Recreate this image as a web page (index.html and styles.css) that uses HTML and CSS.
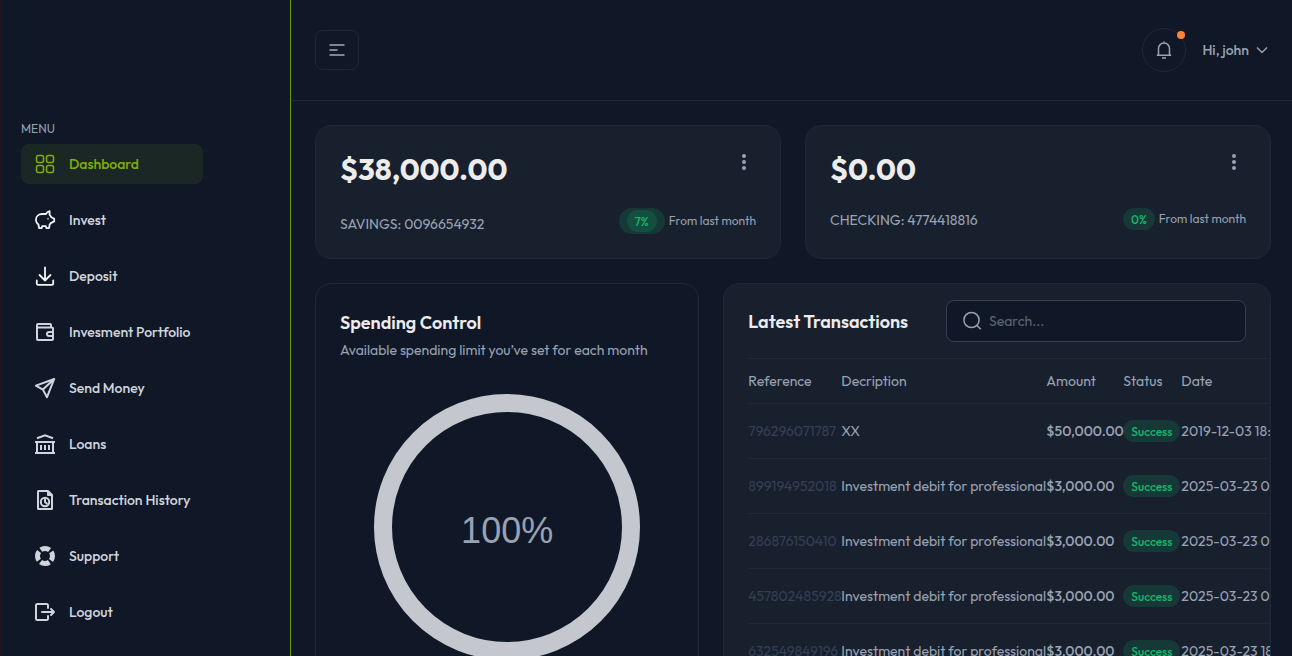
FILE: index.html
```html
<!DOCTYPE html>
<html lang="en">
<head>
<meta charset="utf-8">
<meta name="viewport" content="width=device-width, initial-scale=1">
<title>Dashboard</title>
<link rel="stylesheet" href="styles.css">
</head>
<body>
<div class="app">
  <aside class="sidebar">
    <h2 class="menu-title">MENU</h2>
    <nav class="menu">
      <a class="menu-item active" href="#"><svg class="icon thin" viewBox="0 0 24 24"><rect x="3.5" y="3.5" width="7" height="7" rx="2"/><rect x="13.5" y="3.5" width="7" height="7" rx="2"/><rect x="3.5" y="13.5" width="7" height="7" rx="2"/><rect x="13.5" y="13.5" width="7" height="7" rx="2"/></svg>Dashboard</a>
      <a class="menu-item" href="#"><svg class="icon" viewBox="0 0 24 24"><path class="bright" d="M16.6 3.2v3.6l1.8 2.5 2.8 1.5v2.6l-3.4 1.7-1.1 1.4-.7 3.7h-2.5l-.7-2H9.2l-.6 2H6.2l-.8-3.700A6 6 0 0 1 2.900 12C2.900 8.300 5.700 6 9.200 6h3.700c.8-1.500 2-2.400 3.700-2.800z"/><circle class="eye" cx="15" cy="10.800" r="1"/></svg>Invest</a>
      <a class="menu-item" href="#"><svg class="icon" viewBox="0 0 24 24"><path class="bright" d="M12 3.500v13M6.500 11l5.500 5.500 5.500-5.500M3.800 16.500v3a1.300 1.300 0 0 0 1.300 1.300h13.800a1.300 1.300 0 0 0 1.300-1.300v-3"/></svg>Deposit</a>
      <a class="menu-item" href="#"><svg class="icon bold" viewBox="0 0 24 24"><path d="M18 7V5a1 1 0 0 0-1-1H5a1 1 0 0 0-1 1v14a1 1 0 0 0 1 1h14a1 1 0 0 0 1-1v-2.500M4 7.500h15a1 1 0 0 1 1 1V11M20 12h-4a2 2 0 0 0 0 4h4z"/></svg>Invesment Portfolio</a>
      <a class="menu-item" href="#"><svg class="icon bold" viewBox="0 0 24 24"><path d="M21.200 3 2.900 9.600l7 4 4.100 7.600zM21.200 3 9.900 13.600"/></svg>Send Money</a>
      <a class="menu-item" href="#"><svg class="icon bold square" viewBox="0 0 24 24"><path d="M4 6.200 12 3.200l8 3M2 10h20M2 21h20M4 10v11M20 10v11M8 13v5M12 13v5M16 13v5"/></svg>Loans</a>
      <a class="menu-item" href="#"><svg class="icon bold" viewBox="0 0 24 24"><path d="M15 3H5.500a.5.500 0 0 0-.5.500v17a.5.500 0 0 0 .5.500h13a.5.500 0 0 0 .5-.5V7zM15 3v4h4M12 11.500V14l1.800 1.600"/><circle cx="12" cy="14" r="4.200"/></svg>Transaction History</a>
      <a class="menu-item" href="#"><svg class="icon" viewBox="0 0 24 24"><circle class="buoy" cx="12" cy="12" r="7.500"/></svg>Support</a>
      <a class="menu-item" href="#"><svg class="icon bold" viewBox="0 0 24 24"><path d="M15 8V5.200A1.200 1.200 0 0 0 13.800 4H4.200A1.200 1.200 0 0 0 3 5.200v13.600A1.200 1.200 0 0 0 4.200 20h9.600a1.200 1.200 0 0 0 1.200-1.200V16M9 12h12M18 9l3 3-3 3"/></svg>Logout</a>
    </nav>
  </aside>
  <div class="content">
    <header class="topbar">
      <button class="toggle" aria-label="Toggle sidebar"><svg class="bars" width="16" height="12" viewBox="0 0 16 12"><path d="M.5 1h15M.5 6h8M.5 11h15"/></svg></button>
      <div class="account">
        <button class="bell" aria-label="Notifications"><svg width="20" height="20" viewBox="0 0 20 20"><path d="M2.800 15.200h14.400M4.500 15V8.500a5.500 5.500 0 0 1 11 0V15M10 1.500V3M8 18h4"/></svg><span class="dot"></span></button>
        <button class="user">Hi, john<svg width="12" height="8" viewBox="0 0 12 8"><path d="m1 1.500 5 5 5-5"/></svg></button>
      </div>
    </header>
    <main class="main">
      <section class="card balance">
        <div class="balance-top"><h3 class="amount">$38,000.00</h3><button class="more" aria-label="More"><svg width="4" height="16" viewBox="0 0 4 16"><circle cx="2" cy="2" r="2"/><circle cx="2" cy="8" r="2"/><circle cx="2" cy="14" r="2"/></svg></button></div>
        <div class="balance-bottom"><span class="account-no">SAVINGS: 0096654932</span><span class="change"><span class="pill outer"><span class="pill">7%</span></span>From last month</span></div>
      </section>
      <section class="card balance">
        <div class="balance-top"><h3 class="amount">$0.00</h3><button class="more" aria-label="More"><svg width="4" height="16" viewBox="0 0 4 16"><circle cx="2" cy="2" r="2"/><circle cx="2" cy="8" r="2"/><circle cx="2" cy="14" r="2"/></svg></button></div>
        <div class="balance-bottom"><span class="account-no">CHECKING: 4774418816</span><span class="change"><span class="pill">0%</span>From last month</span></div>
      </section>
      <section class="card spending">
        <h3 class="card-title">Spending Control</h3>
        <p class="subtitle">Available spending limit you’ve set for each month</p>
        <div class="ring">100%</div>
      </section>
      <section class="card transactions">
        <div class="tx-head">
          <h3 class="card-title">Latest Transactions</h3>
          <label class="search"><svg width="20" height="20" viewBox="0 0 20 20"><circle cx="8.500" cy="9" r="7.600"/><path d="m14 14.500 3.800 3.800"/></svg><input type="search" aria-label="Search" placeholder="Search..."></label>
        </div>
        <div class="table-wrap">
          <table class="tx">
            <colgroup><col class="c-ref"><col class="c-desc"><col class="c-amount"><col class="c-status"><col class="c-date"></colgroup>
            <thead><tr><th>Reference</th><th>Decription</th><th>Amount</th><th>Status</th><th>Date</th></tr></thead>
            <tbody>
              <tr><td class="ref">796296071787</td><td>XX</td><td class="sum">$50,000.00</td><td><span class="pill">Success</span></td><td>2019-12-03 18:24</td></tr>
              <tr><td class="ref">899194952018</td><td>Investment debit for professional</td><td class="sum">$3,000.00</td><td><span class="pill">Success</span></td><td>2025-03-23 09:10</td></tr>
              <tr><td class="ref">286876150410</td><td>Investment debit for professional</td><td class="sum">$3,000.00</td><td><span class="pill">Success</span></td><td>2025-03-23 09:08</td></tr>
              <tr><td class="ref">457802485928</td><td>Investment debit for professional</td><td class="sum">$3,000.00</td><td><span class="pill">Success</span></td><td>2025-03-23 09:05</td></tr>
              <tr><td class="ref">632549849196</td><td>Investment debit for professional</td><td class="sum">$3,000.00</td><td><span class="pill">Success</span></td><td>2025-03-23 18:02</td></tr>
            </tbody>
          </table>
        </div>
      </section>
    </main>
  </div>
</div>
</body>
</html>
```
FILE: styles.css
```css
* { box-sizing: border-box; }
body {
  margin: 0;
  background: #101726;
  color: #98a2b3;
  font: 14px/20px Outfit, Lato, sans-serif;
}
h2, h3, p { margin: 0; }
button { padding: 0; border: 0; background: none; color: inherit; font: inherit; }
svg { display: block; flex: none; fill: none; stroke: currentColor; stroke-width: 1.5; }

.app { display: flex; height: 100vh; overflow: hidden; }
.sidebar {
  flex: none;
  width: 291px;
  padding: 119px 20px 0;
  border-left: 1px solid #20151f;
  border-right: 1px solid #6b9a00;
}
.menu-title { font-size: 12px; font-weight: 400; line-height: 20px; }
.menu { display: flex; flex-direction: column; gap: 16px; width: 182px; margin-top: 5px; }
.menu-item {
  display: flex;
  align-items: center;
  gap: 12px;
  height: 40px;
  padding: 0 12px;
  border-radius: 8px;
  color: #d0d5dd;
  font-size: 14px;
  font-weight: 500;
  white-space: nowrap;
  text-decoration: none;
}
.menu-item.active { background: #1b2724; color: #80b000; }
.icon { width: 24px; height: 24px; stroke-width: 1.8; stroke-linejoin: round; stroke-linecap: round; }
.icon.thin { stroke-width: 1.5; }
.icon.bold { stroke-width: 2; }
.icon.square { stroke-linecap: butt; stroke-linejoin: miter; }
.bright { stroke: #f2f4f7; }
.eye { fill: #98a2b3; stroke: none; }
.icon .buoy { stroke-width: 5; stroke-linecap: butt; stroke-dasharray: 9.400 2.381; stroke-dashoffset: 4.700; }

.content { flex: 1; min-width: 0; }
.topbar {
  display: flex;
  align-items: center;
  justify-content: space-between;
  height: 101px;
  padding: 0 24px;
  border-bottom: 1px solid #1d2939;
}
.toggle {
  display: grid;
  place-items: center;
  width: 44px;
  height: 40px;
  border: 1px solid #1d2939;
  border-radius: 8px;
}
.bars { stroke-width: 2; opacity: 0.8; }
.account { display: flex; align-items: center; gap: 16px; }
.bell {
  position: relative;
  display: grid;
  place-items: center;
  width: 44px;
  height: 44px;
  border: 1px solid #1d2939;
  border-radius: 50%;
}
.dot { position: absolute; top: 2px; right: 0; width: 8px; height: 8px; border-radius: 50%; background: #fd853a; }
.user { display: flex; align-items: center; gap: 7px; font-weight: 500; }

.main { display: grid; grid-template-columns: repeat(12, minmax(0, 1fr)); gap: 24px; padding: 24px 21px 24px 24px; }
.card { border: 1px solid #1d2939; border-radius: 16px; background: #181f2d; }
.balance { grid-column: span 6; padding: 24px; height: 134px; }
.balance-top { display: flex; align-items: flex-start; justify-content: space-between; height: 40px; }
.amount { color: #ececed; font-size: 30px; font-weight: 700; line-height: 38px; }
.more { padding: 4px 10px; }
.more svg { fill: currentColor; stroke: none; }
.balance-bottom { display: flex; align-items: flex-end; justify-content: space-between; margin-top: 18px; }
.change { display: flex; align-items: center; gap: 4px; font-size: 12px; line-height: 22px; }
.pill {
  display: inline-block;
  padding: 3px 8px 1px;
  border-radius: 11px;
  background: rgba(18, 183, 106, 0.17);
  color: #12b76a;
  font-size: 12px;
  font-weight: 500;
  line-height: 18px;
}
.pill.outer { display: flex; padding: 2px 8px; border-radius: 13px; }
.spending { grid-column: span 5; padding: 25px 24px 24px; background: #101726; }
.card-title { color: #ececed; font-size: 18px; font-weight: 600; line-height: 28px; white-space: nowrap; }
.subtitle { margin-top: 3px; white-space: nowrap; }
.ring {
  display: grid;
  place-items: center;
  width: 266px;
  height: 266px;
  margin: 34px auto 24px;
  padding-top: 8px;
  border: 18px solid #c5c7cf;
  border-radius: 50%;
  font: 36px/40px Helvetica, "Liberation Sans", sans-serif;
}
.transactions { grid-column: span 7; overflow: hidden; }
.tx-head { display: flex; align-items: center; justify-content: space-between; padding: 16px 24px; }
.tx-head .card-title { line-height: 30px; padding-top: 2px; }
.search {
  display: flex;
  align-items: center;
  gap: 6px;
  width: 300px;
  height: 42px;
  padding: 0 16px;
  border: 1px solid #344054;
  border-radius: 8px;
  background: #101726;
}
.search input { flex: 1; min-width: 0; padding: 0; border: 0; outline: 0; background: none; color: inherit; font: inherit; }
.search input::placeholder { color: #5d6575; opacity: 1; }
.table-wrap { margin-left: 24px; overflow: hidden; }
.tx { width: 610px; table-layout: fixed; border-collapse: collapse; }
.tx th, .tx td { padding: 0; border-top: 1px solid #1d2939; text-align: left; white-space: nowrap; }
.tx th { height: 45px; font-weight: 400; }
.tx td { height: 55px; }
.tx .ref { color: #344054; }
.tx .sum { font-weight: 500; }
.c-ref { width: 93px; }
.c-desc { width: 205px; }
.c-amount { width: 77px; }
.c-status { width: 58px; }
```
